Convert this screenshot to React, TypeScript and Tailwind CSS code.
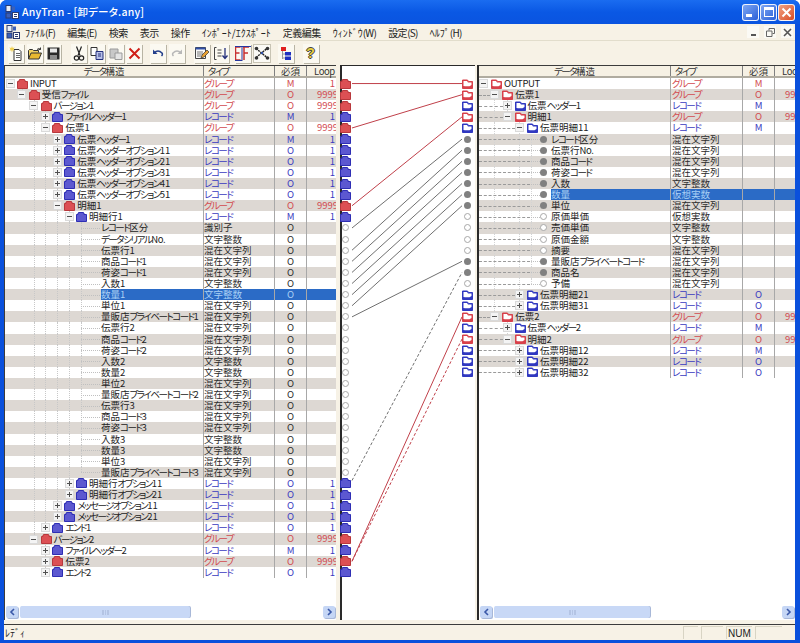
import React from "react";

type Row = { l: number; n: string; k: "g" | "r" | "x"; t?: string; q?: string; p?: string; s?: boolean; e?: "+" | "-"; c?: boolean };

const g = (l: number, n: string, q: string, p: string, e: "+" | "-" = "-"): Row => ({ l, n, k: "g", t: "グループ", q, p, e });
const r = (l: number, n: string, q: string, p: string, e: "+" | "-" = "+"): Row => ({ l, n, k: "r", t: "レコード", q, p, e });
const f = (l: number, n: string, t: string, q = "", c = false, s = false): Row => ({ l, n, k: "x", t, q, c, s });

const MIX = "混在文字列";
const INT = "文字整数";
const REAL = "仮想実数";

const leftRows: Row[] = [
  g(0, "INPUT", "M", "1"),
  g(1, "受信ファイル", "O", "9999"),
  g(2, "バージョン1", "O", "9999"),
  r(3, "ファイルヘッダー1", "M", "1"),
  g(3, "伝票1", "O", "9999"),
  r(4, "伝票ヘッダー1", "M", "1"),
  r(4, "伝票ヘッダーオプション11", "O", "1"),
  r(4, "伝票ヘッダーオプション21", "O", "1"),
  r(4, "伝票ヘッダーオプション31", "O", "1"),
  r(4, "伝票ヘッダーオプション41", "O", "1"),
  r(4, "伝票ヘッダーオプション51", "O", "1"),
  g(4, "明細1", "O", "9999"),
  r(5, "明細行1", "M", "1", "-"),
  f(6, "レコード区分", "識別子", "O"),
  f(6, "データシリアルNo.", INT, "O"),
  f(6, "伝票行1", MIX, "O"),
  f(6, "商品コード1", MIX, "O"),
  f(6, "荷姿コード1", MIX, "O"),
  f(6, "入数1", INT, "O"),
  f(6, "数量1", INT, "O", false, true),
  f(6, "単位1", MIX, "O"),
  f(6, "量販店プライベートコード1", MIX, "O"),
  f(6, "伝票行2", MIX, "O"),
  f(6, "商品コード2", MIX, "O"),
  f(6, "荷姿コード2", MIX, "O"),
  f(6, "入数2", INT, "O"),
  f(6, "数量2", INT, "O"),
  f(6, "単位2", MIX, "O"),
  f(6, "量販店プライベートコード2", MIX, "O"),
  f(6, "伝票行3", MIX, "O"),
  f(6, "商品コード3", MIX, "O"),
  f(6, "荷姿コード3", MIX, "O"),
  f(6, "入数3", INT, "O"),
  f(6, "数量3", INT, "O"),
  f(6, "単位3", MIX, "O"),
  f(6, "量販店プライベートコード3", MIX, "O"),
  r(5, "明細行オプション11", "O", "1"),
  r(5, "明細行オプション21", "O", "1"),
  r(4, "メッセージオプション11", "O", "1"),
  r(4, "メッセージオプション21", "O", "1"),
  r(3, "エンド1", "O", "1"),
  g(2, "バージョン2", "O", "9999"),
  r(3, "ファイルヘッダー2", "M", "1"),
  g(3, "伝票2", "O", "9999", "+"),
  r(3, "エンド2", "O", "1"),
];

const rightRows: Row[] = [
  g(0, "OUTPUT", "M", ""),
  g(1, "伝票1", "O", "9999"),
  r(2, "伝票ヘッダー1", "M", ""),
  g(2, "明細1", "O", "9999"),
  r(3, "伝票明細11", "M", "", "-"),
  f(4, "レコード区分", MIX, "", true),
  f(4, "伝票行No.", MIX, "", true),
  f(4, "商品コード", MIX, "", true),
  f(4, "荷姿コード", MIX, "", true),
  f(4, "入数", INT, "", true),
  f(4, "数量", REAL, "", true, true),
  f(4, "単位", MIX, "", true),
  f(4, "原価単価", REAL),
  f(4, "売価単価", INT),
  f(4, "原価金額", INT),
  f(4, "摘要", MIX),
  f(4, "量販店プライベートコード", MIX, "", true),
  f(4, "商品名", MIX, "", true),
  f(4, "予備", MIX),
  r(3, "伝票明細21", "O", ""),
  r(3, "伝票明細31", "O", ""),
  g(1, "伝票2", "O", "9999"),
  r(2, "伝票ヘッダー2", "M", ""),
  g(2, "明細2", "O", "9999"),
  r(3, "伝票明細12", "M", ""),
  r(3, "伝票明細22", "O", ""),
  r(3, "伝票明細32", "O", ""),
];

const ROW = 11.11;

const links: [number, number, string, boolean][] = [
  [0, 0, "#c0404a", false],
  [4, 1, "#c0404a", false],
  [11, 3, "#c0404a", false],
  [13, 5, "#707070", false],
  [15, 6, "#707070", false],
  [16, 7, "#707070", false],
  [17, 8, "#707070", false],
  [18, 9, "#707070", false],
  [19, 10, "#707070", false],
  [20, 11, "#707070", false],
  [21, 16, "#707070", false],
  [36, 17, "#707070", true],
  [43, 21, "#c0404a", false],
  [43, 23, "#c0404a", true],
];

/* Kana is much narrower than kanji in the original's proportional Gothic. */
function Txt({ s }: { s: string }) {
  const parts = s.split(/([ァ-ヶー]+|[A-Za-z.]+)/).filter(Boolean);
  return (
    <>
      {parts.map((p, i) =>
        /^[ァ-ヶー]/.test(p) ? (
          <span key={i} className="tracking-[-1.5px]">{p}</span>
        ) : /^[A-Za-z.]/.test(p) ? (
          <span key={i} className="tracking-[-0.4px]">{p}</span>
        ) : (
          <span key={i}>{p}</span>
        )
      )}
    </>
  );
}

function MenuTxt({ s }: { s: string }) {
  const parts = s.split(/(\([A-Z]\)|[\u4e00-\u9fff]+)/).filter(Boolean);
  return (
    <span>
      {parts.map((p, i) =>
        p.startsWith("(") ? (
          <span key={i} className="tracking-[-0.7px]">{p}</span>
        ) : /^[\u4e00-\u9fff]/.test(p) ? (
          <span key={i} className="tracking-[-0.5px]">{p}</span>
        ) : (
          <span key={i}>{p}</span>
        )
      )}
    </span>
  );
}

function ClosedFolder({ k }: { k: "g" | "r" }) {
  const fill = k === "g" ? "#dc5054" : "#5c58d0";
  const stroke = k === "g" ? "#b8383c" : "#2e2eb4";
  return (
    <svg width="11" height="10" viewBox="0 0 11 10" className="shrink-0">
      <path d="M0.5 9.5V2.5h1.5V1l1-.5h4l1 .5v1.5h2.5v7z" fill={fill} stroke={stroke} />
    </svg>
  );
}

function OpenFolder({ k }: { k: "g" | "r" }) {
  const c = k === "g" ? "#d8404a" : "#3038c0";
  return (
    <svg width="11" height="10" viewBox="0 0 11 10" className="shrink-0">
      <path d="M0.5 9.5V1h5l1 1.5h4v7z" fill={c} stroke={c} />
      <path d="M1.5 7V2h3.5l1 1.5h3.5v2.5l-2 1.2H3z" fill="#ffffff" />
    </svg>
  );
}

function Expander({ e }: { e: "+" | "-" }) {
  return (
    <svg width="9" height="9" viewBox="0 0 9 9" className="relative z-10 shrink-0">
      <rect x="0.5" y="0.5" width="8" height="8" fill="#f4f4f4" stroke="#dadada" />
      <path d={e === "+" ? "M2 4.5h5M4.5 2v5" : "M2 4.5h5"} stroke="#505050" strokeWidth="1" />
    </svg>
  );
}

function Guides({ rows, i, x, dashed }: { rows: Row[]; i: number; x: (k: number) => number; dashed: boolean }) {
  const row = rows[i];
  const out: React.ReactNode[] = [];
  for (let k = 1; k <= row.l; k++) {
    let more = false;
    for (let j = i + 1; j < rows.length; j++) {
      if (rows[j].l < k) break;
      if (rows[j].l === k) {
        more = true;
        break;
      }
    }
    if (!more && k !== row.l) continue;
    out.push(
      <span
        key={k}
        className={`absolute top-0 border-l border-dotted ${dashed ? "border-[#d4d4d4]" : "border-[#c8c8c8]"}`}
        style={{ left: x(k), height: more ? "100%" : "50%" }}
      />
    );
  }
  return <>{out}</>;
}

function colorOf(row: Row) {
  if (row.s) return "text-[#a9d0f5]";
  if (row.k === "g") return "text-[#d24a50]";
  if (row.k === "r") return "text-[#3a3ac0]";
  return "text-[#2c2c2c]";
}

function DataRow({ rows, i, side }: { rows: Row[]; i: number; side: "L" | "R" }) {
  const row = rows[i];
  const stripe = i % 2 === 1 ? "bg-[#ddd8d3]" : "bg-white";
  const color = colorOf(row);
  const isLeft = side === "L";
  const x = (k: number) => (isLeft ? 5 + 11.8 * k : 3 + 12.3 * k);
  const sel = row.s ? "bg-[#2b6bc6]" : "";
  const cell = `h-full border-l border-[#a8a8a8] whitespace-nowrap ${sel}`;
  const startPad = isLeft ? 0.5 + 11.8 * row.l : Math.max(0, 12.3 * row.l - 1);
  const leaf = !row.e;
  const textX = isLeft ? 96 : 72;
  const connectorEnd = isLeft ? 95 : 61;
  return (
    <div className={`flex h-[11.11px] leading-[11px] ${stripe}`}>
      <div className={`relative flex shrink-0 items-center ${isLeft ? "w-[198px]" : "w-[191px]"}`}>
        <Guides rows={rows} i={i} x={x} dashed={!isLeft} />
        {!isLeft && (
          <span
            className="absolute left-0 top-1/2 border-t border-dashed border-[#9a9a9a]"
            style={{ width: leaf ? 51 : startPad }}
          />
        )}
        {leaf ? (
          <>
            <span
              className="absolute top-1/2 border-t border-dotted border-[#c0c0c0]"
              style={{ left: x(row.l), width: connectorEnd - x(row.l) }}
            />
            {!isLeft && (
              <span
                className={`absolute left-[60.5px] top-[2px] h-[7px] w-[7px] rounded-full ${row.c ? "bg-[#808080]" : "border border-[#a8a8a8] bg-white"}`}
              />
            )}
            <span className="h-full shrink-0" style={{ width: textX }} />
            <span className={`h-full flex-1 whitespace-nowrap ${row.s ? "bg-[#2b6bc6] text-[#a9d0f5]" : "text-[#222]"}`}>
              <Txt s={row.n} />
            </span>
          </>
        ) : (
          <>
            <span className="shrink-0" style={{ width: startPad }} />
            <Expander e={row.e!} />
            <span className={isLeft ? "ml-[2.5px]" : "ml-[3px]"}>
              {isLeft ? <ClosedFolder k={row.k as "g" | "r"} /> : <OpenFolder k={row.k as "g" | "r"} />}
            </span>
            <span className="ml-[2px] whitespace-nowrap text-[#222]">
              <Txt s={row.n} />
            </span>
          </>
        )}
      </div>
      <div className={`${cell} shrink-0 ${isLeft ? "w-[71px]" : "w-[72px] pl-px"} ${color}`}>
        <Txt s={row.t ?? ""} />
      </div>
      <div className={`${cell} w-[32px] shrink-0 text-center ${color}`}>{row.q}</div>
      <div className={`${cell} w-[30px] shrink-0 text-right ${color}`}>
        <span className={`inline-block ${row.p === "9999" ? "-mr-[2px]" : "mr-[1px]"}`}>{row.p}</span>
      </div>
    </div>
  );
}

function Header({ side }: { side: "L" | "R" }) {
  const isLeft = side === "L";
  const sep = "h-full border-l border-[#808080] whitespace-nowrap";
  return (
    <div className="flex h-[13px] shrink-0 border-b-2 border-t border-[#3c3c3c] border-b-[#b0aca0] bg-[#f6f1e4] leading-[10px] text-[#333]">
      <div className={`shrink-0 text-center ${isLeft ? "w-[198px]" : "w-[191px]"}`}>
        <Txt s="データ構造" />
      </div>
      <div className={`${sep} shrink-0 pl-[4px] ${isLeft ? "w-[71px]" : "w-[72px]"}`}>
        <Txt s="タイプ" />
      </div>
      <div className={`${sep} w-[32px] shrink-0 text-center`}>必須</div>
      <div className={`${sep} w-[30px] shrink-0 pl-[7px]`}>
        <Txt s="Loop" />
      </div>
    </div>
  );
}

function Arrow({ dir }: { dir: "l" | "r" }) {
  return (
    <div className="flex h-[12px] w-[12px] shrink-0 items-center justify-center rounded-[2px] bg-[#c5d6f5] shadow-[1px_1px_0_#a8b8d8]">
      <svg width="7" height="8" viewBox="0 0 7 8">
        <path d={dir === "l" ? "M5 1L2 4l3 3" : "M2 1l3 3-3 3"} fill="none" stroke="#3a58a8" strokeWidth="1.6" />
      </svg>
    </div>
  );
}

function Scrollbar({ thumb }: { thumb: string }) {
  return (
    <div className="mb-[1px] mt-auto flex h-[14px] shrink-0 items-center bg-white pl-[1px] pr-[1px]">
      <Arrow dir="l" />
      <div className={`mx-[2px] flex h-[12px] items-center justify-center rounded-[2px] bg-[#c8d8f6] shadow-[1px_0_0_#a8b8d8] ${thumb}`}>
        <span className="h-[5px] w-[7px] border-x border-[#b4c4e4] bg-[repeating-linear-gradient(90deg,#b4c4e4_0_1px,transparent_1px_2px)]" />
      </div>
      <div className="flex-1" />
      <Arrow dir="r" />
    </div>
  );
}

function Btn({ children, down }: { children: React.ReactNode; down?: boolean }) {
  return (
    <div
      className={`flex h-[19px] shrink-0 items-center justify-center overflow-hidden ${
        down ? "w-[18px] border border-[#c8c4b4] bg-[#fbfaf5]" : "w-[16px] bg-[#fbf9f1] shadow-[1px_1px_0_#b8b4a4]"
      }`}
    >
      {children}
    </div>
  );
}

function AppIcon() {
  return (
    <svg width="14" height="14" viewBox="0 0 14 14" className="shrink-0">
      <rect x="1" y="0.5" width="5" height="6" fill="#e8eef8" stroke="#2c3c70" />
      <rect x="7" y="1.5" width="3" height="4" fill="#3a5fb8" />
      <rect x="1" y="8" width="5" height="5" fill="#3a5fb8" stroke="#2c3c70" />
      <rect x="7.5" y="7.5" width="6" height="6" fill="#ffffff" stroke="#2c3c70" />
      <path d="M9 9.5h3M9 11.5h3" stroke="#2c3c70" />
    </svg>
  );
}

function WinBtn({ kind }: { kind: "min" | "max" | "close" }) {
  const bg =
    kind === "close"
      ? "bg-gradient-to-br from-[#f0a080] to-[#d84a20]"
      : "bg-gradient-to-br from-[#7ea6f2] to-[#2a5ed8]";
  return (
    <div className={`flex h-[17px] w-[17px] items-center justify-center rounded-[3px] border border-white/90 ${bg}`}>
      {kind === "min" && <div className="-ml-[3px] mt-[7px] h-[3px] w-[6px] bg-white" />}
      {kind === "max" && <div className="h-[10px] w-[10px] border border-t-[3px] border-white" />}
      {kind === "close" && (
        <svg width="11" height="11" viewBox="0 0 11 11">
          <path d="M1.5 1.5l8 8M9.5 1.5l-8 8" stroke="#fff" strokeWidth="2" />
        </svg>
      )}
    </div>
  );
}

const menu = ["ﾌｧｲﾙ(F)", "編集(E)", "検索", "表示", "操作", "ｲﾝﾎﾟｰﾄ/ｴｸｽﾎﾟｰﾄ", "定義編集", "ｳｨﾝﾄﾞｳ(W)", "設定(S)", "ﾍﾙﾌﾟ(H)"];

export default function App() {
  return (
    <div className="h-[643px] w-[800px] overflow-hidden bg-white font-['Noto_Sans_CJK_JP',sans-serif] text-[9.5px] [font-feature-settings:'palt']">
      <div className="flex h-full w-full flex-col rounded-t-[7px] bg-[#0a50dc]">
        {/* Title bar */}
        <div className="flex h-[24px] shrink-0 items-center rounded-t-[7px] bg-gradient-to-b from-[#1a6cf0] via-[#0a58e4] to-[#0a54e0] pl-[5px] pr-[5px]">
          <AppIcon />
          <span className="ml-[3px] text-[10.5px] font-medium tracking-[0.2px] text-white">AnyTran - [卸データ.any]</span>
          <div className="ml-auto flex gap-[1px]">
            <WinBtn kind="min" />
            <WinBtn kind="max" />
            <WinBtn kind="close" />
          </div>
        </div>

        <div className="mb-[3px] ml-[4px] mr-[5px] flex min-h-0 flex-1 flex-col overflow-hidden bg-[#f7f2e6]">
          {/* Menu */}
          <div className="flex h-[16px] shrink-0 items-center pl-[2px] text-[10px] text-[#222]">
            <AppIcon />
            <div className="ml-[5px] flex gap-[12px] whitespace-nowrap [font-feature-settings:normal]">
              {menu.map((m) => (
                <MenuTxt key={m} s={m} />
              ))}
            </div>
            <div className="ml-auto flex items-center gap-[5px] pr-[2px]">
              <span className="flex h-[12px] w-[12px] items-end justify-center bg-[#fbfaf5] pb-[2px]">
                <span className="h-[2px] w-[5px] bg-[#555]" />
              </span>
              <span className="flex h-[12px] w-[12px] items-center justify-center bg-[#fbfaf5]">
                <svg width="9" height="9" viewBox="0 0 9 9">
                  <path d="M3 2.5V.5h5.5v5H6.5M.5 3h5.5v5.5H.5z" fill="none" stroke="#666" />
                </svg>
              </span>
              <span className="flex h-[12px] w-[12px] items-center justify-center bg-[#fbfaf5]">
                <svg width="9" height="9" viewBox="0 0 9 9">
                  <path d="M1 1l7 7M8 1l-7 7" stroke="#555" strokeWidth="1.6" />
                </svg>
              </span>
            </div>
          </div>

          {/* Toolbar */}
          <div className="flex h-[25px] shrink-0 items-center border-t border-[#e2ddcc] pl-[4px]">
            <div className="flex gap-[2.5px]">
              <Btn>
                <svg width="14" height="15" viewBox="0 0 14 15">
                  <path d="M5 3.5h5l2 2v9H5z" fill="#fff" stroke="#333" />
                  <path d="M7 7.5h4M7 9.5h4M7 11.5h4" stroke="#666" />
                  <path d="M3 0l.7 2 2-.5-1.200 1.700 1.200 1.500-2-.4L3 6.500 2.300 4.300l-2 .4 1.200-1.500L.3 1.500l2 .5z" fill="#f0d050" />
                </svg>
              </Btn>
              <Btn>
                <svg width="14" height="13" viewBox="0 0 14 13">
                  <path d="M.5 12V3.500L1.500 2.500h3l1 1h5v2" fill="#f0d060" stroke="#333" />
                  <path d="M.5 12l2.500-6h10.500L11 12z" fill="#e8b830" stroke="#333" />
                  <path d="M9 2.500q2-2 3.500 0M12.500 2.500v-2M12.500 2.500h-2" fill="none" stroke="#333" />
                </svg>
              </Btn>
              <Btn>
                <svg width="13" height="13" viewBox="0 0 13 13">
                  <path d="M.5.5h12v12H.5z" fill="#2a2a2a" />
                  <rect x="3" y="1.500" width="7" height="4" fill="#e8e8e8" />
                  <rect x="3" y="8" width="7" height="4.500" fill="#8c8c8c" />
                </svg>
              </Btn>
            </div>
            <div className="ml-[9.5px] flex gap-[2.5px]">
              <Btn>
                <svg width="12" height="15" viewBox="0 0 12 15">
                  <path d="M3.500.5l3.500 9M8.500.5L5 9.500" stroke="#222" strokeWidth="1.200" fill="none" />
                  <circle cx="3.500" cy="12" r="2.200" fill="none" stroke="#222" strokeWidth="1.200" />
                  <circle cx="8.500" cy="12" r="2.200" fill="none" stroke="#222" strokeWidth="1.200" />
                </svg>
              </Btn>
              <Btn>
                <svg width="14" height="13" viewBox="0 0 14 13">
                  <path d="M1 .5h6v8H1z" fill="#fff" stroke="#333" />
                  <path d="M6 4.500h7v8H6z" fill="#b8c0e8" stroke="#24307c" />
                  <path d="M8 7h3M8 9h3" stroke="#24307c" />
                </svg>
              </Btn>
              <Btn>
                <svg width="14" height="13" viewBox="0 0 14 13">
                  <path d="M1 2h8v9H1z" fill="#c8c8c8" stroke="#9a9a9a" />
                  <path d="M6 6h7v6.500H6z" fill="#e4e4e4" stroke="#9a9a9a" />
                </svg>
              </Btn>
              <Btn>
                <svg width="13" height="13" viewBox="0 0 13 13">
                  <path d="M1.500 1.500l10 10M11.500 1.500l-10 10" stroke="#d02018" strokeWidth="2" />
                </svg>
              </Btn>
            </div>
            <div className="ml-[8px] flex gap-[3px]">
              <Btn>
                <svg width="12" height="10" viewBox="0 0 12 10">
                  <path d="M2 5q4-4 8 0 1 1.500-.5 3" fill="none" stroke="#24408c" strokeWidth="1.500" />
                  <path d="M1 1.500v4.500h4.500z" fill="#24408c" />
                </svg>
              </Btn>
              <Btn>
                <svg width="12" height="10" viewBox="0 0 12 10">
                  <path d="M10 5q-4-4-8 0-1 1.500.5 3" fill="none" stroke="#b8b8b8" strokeWidth="1.500" />
                  <path d="M11 1.500v4.500h-4.500z" fill="#b8b8b8" />
                </svg>
              </Btn>
            </div>
            <div className="ml-[9px] flex gap-[3px]">
              <Btn>
                <svg width="15" height="14" viewBox="0 0 15 14">
                  <path d="M.5 1.500h10v11H.5z" fill="#f8f8f8" stroke="#444" />
                  <path d="M.5 1.500h10v2h-10z" fill="#3050a8" />
                  <path d="M2 6h6M2 8h6M2 10h4" stroke="#777" />
                  <path d="M6 12l1-3 5-5 2 2-5 5z" fill="#e8a030" stroke="#333" strokeWidth=".7" />
                </svg>
              </Btn>
              <Btn>
                <svg width="14" height="13" viewBox="0 0 14 13">
                  <path d="M.5.5h2M.5.5v12h2" fill="none" stroke="#444" />
                  <path d="M3.500 3h4M3.500 6h4M3.500 9h4" stroke="#444" />
                  <path d="M11 1v10M8.500 8.500L11 11.500l2.500-3" fill="none" stroke="#24307c" strokeWidth="1.300" />
                </svg>
              </Btn>
            </div>
            <div className="ml-[5.5px] flex gap-[2px]">
              <Btn>
                <svg width="16" height="15" viewBox="0 0 16 15">
                  <path d="M.5 1h5M.5 1v13h5M.5 7h4" fill="none" stroke="#c83030" strokeWidth="1.500" />
                  <path d="M8 1h6M9 1v13M9 7h4" fill="none" stroke="#c83030" strokeWidth="1.500" />
                  <path d="M0 .5h16M0 14.500h7M7 0v15" stroke="#2838a0" strokeWidth="1" />
                </svg>
              </Btn>
              <Btn down>
                <svg width="16" height="15" viewBox="0 0 16 15">
                  <path d="M2 2.500l11 9M2 11.500l11-9" stroke="#222" strokeWidth="1.400" strokeDasharray="2 .8" />
                  <circle cx="2.500" cy="2.500" r="1.800" fill="#333" />
                  <circle cx="2.500" cy="12" r="1.800" fill="#333" />
                  <circle cx="13.500" cy="2.500" r="1.800" fill="#333" />
                  <circle cx="13.500" cy="12" r="1.800" fill="#333" />
                  <circle cx="8" cy="7" r="1.200" fill="#3050a8" />
                </svg>
              </Btn>
            </div>
            <div className="ml-[7px]">
              <Btn>
                <svg width="12" height="13" viewBox="0 0 12 13">
                  <path d="M2.500 1v11" stroke="#999" />
                  <rect x="1" y="0" width="5" height="4" fill="#e02020" />
                  <rect x="5" y="5" width="6" height="3.500" fill="#2030c0" />
                  <rect x="5" y="9.500" width="6" height="3.500" fill="#2030c0" />
                  <path d="M2.500 7h2.500M2.500 11h2.500" stroke="#999" />
                </svg>
              </Btn>
            </div>
            <div className="ml-[9px]">
              <Btn>
                <span className="font-['Liberation_Sans',sans-serif] text-[14px] font-bold leading-none text-[#e8d040] [text-shadow:1px_0_0_#444,-1px_0_0_#444,0_1px_0_#444,0_-1px_0_#444]">?</span>
              </Btn>
            </div>
          </div>

          {/* Main area */}
          <div className="flex h-[555px] shrink-0">
            {/* Left panel */}
            <div className="flex w-[332px] shrink-0 flex-col overflow-hidden border-l border-[#3c3c3c] bg-white">
              <Header side="L" />
              <div className="shrink-0">
                {leftRows.map((_, i) => (
                  <DataRow key={i} rows={leftRows} i={i} side="L" />
                ))}
              </div>
              <Scrollbar thumb="w-[170px]" />
            </div>
            <div className="w-[4px] shrink-0" />

            {/* Mapping panel */}
            <div className="flex w-[135px] shrink-0 flex-col border-l-2 border-t border-[#2a2a2a] bg-white">
              <div className="h-[12px] shrink-0" />
              <div className="relative flex shrink-0 justify-between pr-[2px]">
                <div className="-ml-[1px] flex w-[8px] flex-col items-center">
                  {leftRows.map((row, i) => (
                    <div key={i} className="flex h-[11.11px] items-center justify-center">
                      {row.k === "x" ? (
                        <span className="h-[7px] w-[7px] rounded-full border border-[#a8a8a8] bg-white" />
                      ) : (
                        <ClosedFolder k={row.k} />
                      )}
                    </div>
                  ))}
                </div>
                <div className="flex w-[12px] flex-col">
                  {rightRows.map((row, i) => (
                    <div key={i} className="flex h-[11.11px] items-center justify-center">
                      {row.k === "x" ? (
                        <span className={`h-[7px] w-[7px] rounded-full ${row.c ? "bg-[#808080]" : "border border-[#a8a8a8] bg-white"}`} />
                      ) : (
                        <OpenFolder k={row.k} />
                      )}
                    </div>
                  ))}
                </div>
                <svg className="pointer-events-none absolute left-0 top-0 h-full w-full">
                  {links.map(([a, b, color, dashed], i) => (
                    <line
                      key={i}
                      x1={10}
                      y1={(a + 0.5) * ROW - (dashed && color === "#707070" ? 3 : 0)}
                      x2={120}
                      y2={(b + 0.5) * ROW}
                      stroke={color}
                      strokeWidth="1"
                      strokeDasharray={dashed ? "3 2" : undefined}
                    />
                  ))}
                </svg>
              </div>
            </div>
            <div className="w-[2px] shrink-0" />

            {/* Right panel */}
            <div className="flex min-w-0 flex-1 flex-col overflow-hidden border-l-2 border-[#2a2a2a] bg-white">
              <div className="w-[325px]">
                <Header side="R" />
                {rightRows.map((_, i) => (
                  <DataRow key={i} rows={rightRows} i={i} side="R" />
                ))}
              </div>
              <Scrollbar thumb="w-[156px]" />
            </div>
          </div>

          {/* Status */}
          <div className="mt-[4px] flex min-h-0 flex-1 items-center border-t border-[#3c3c3c] pl-[1px] text-[10px] text-[#222]">
            <span className="[font-feature-settings:normal]">ﾚﾃﾞｨ</span>
            <div className="ml-auto flex h-[13px] items-stretch gap-[3px] pr-[13px]">
              <span className="w-[15px] border-l border-t border-[#d8d4c4]" />
              <span className="w-[22px] border-l border-t border-[#d8d4c4]" />
              <span className="w-[26px] border-l border-t border-[#d8d4c4] text-center font-['Liberation_Sans',sans-serif] leading-[13px]">NUM</span>
              <span className="w-[27px] border-l border-t border-[#d8d4c4]" />
            </div>
          </div>
        </div>
      </div>
    </div>
  );
}
